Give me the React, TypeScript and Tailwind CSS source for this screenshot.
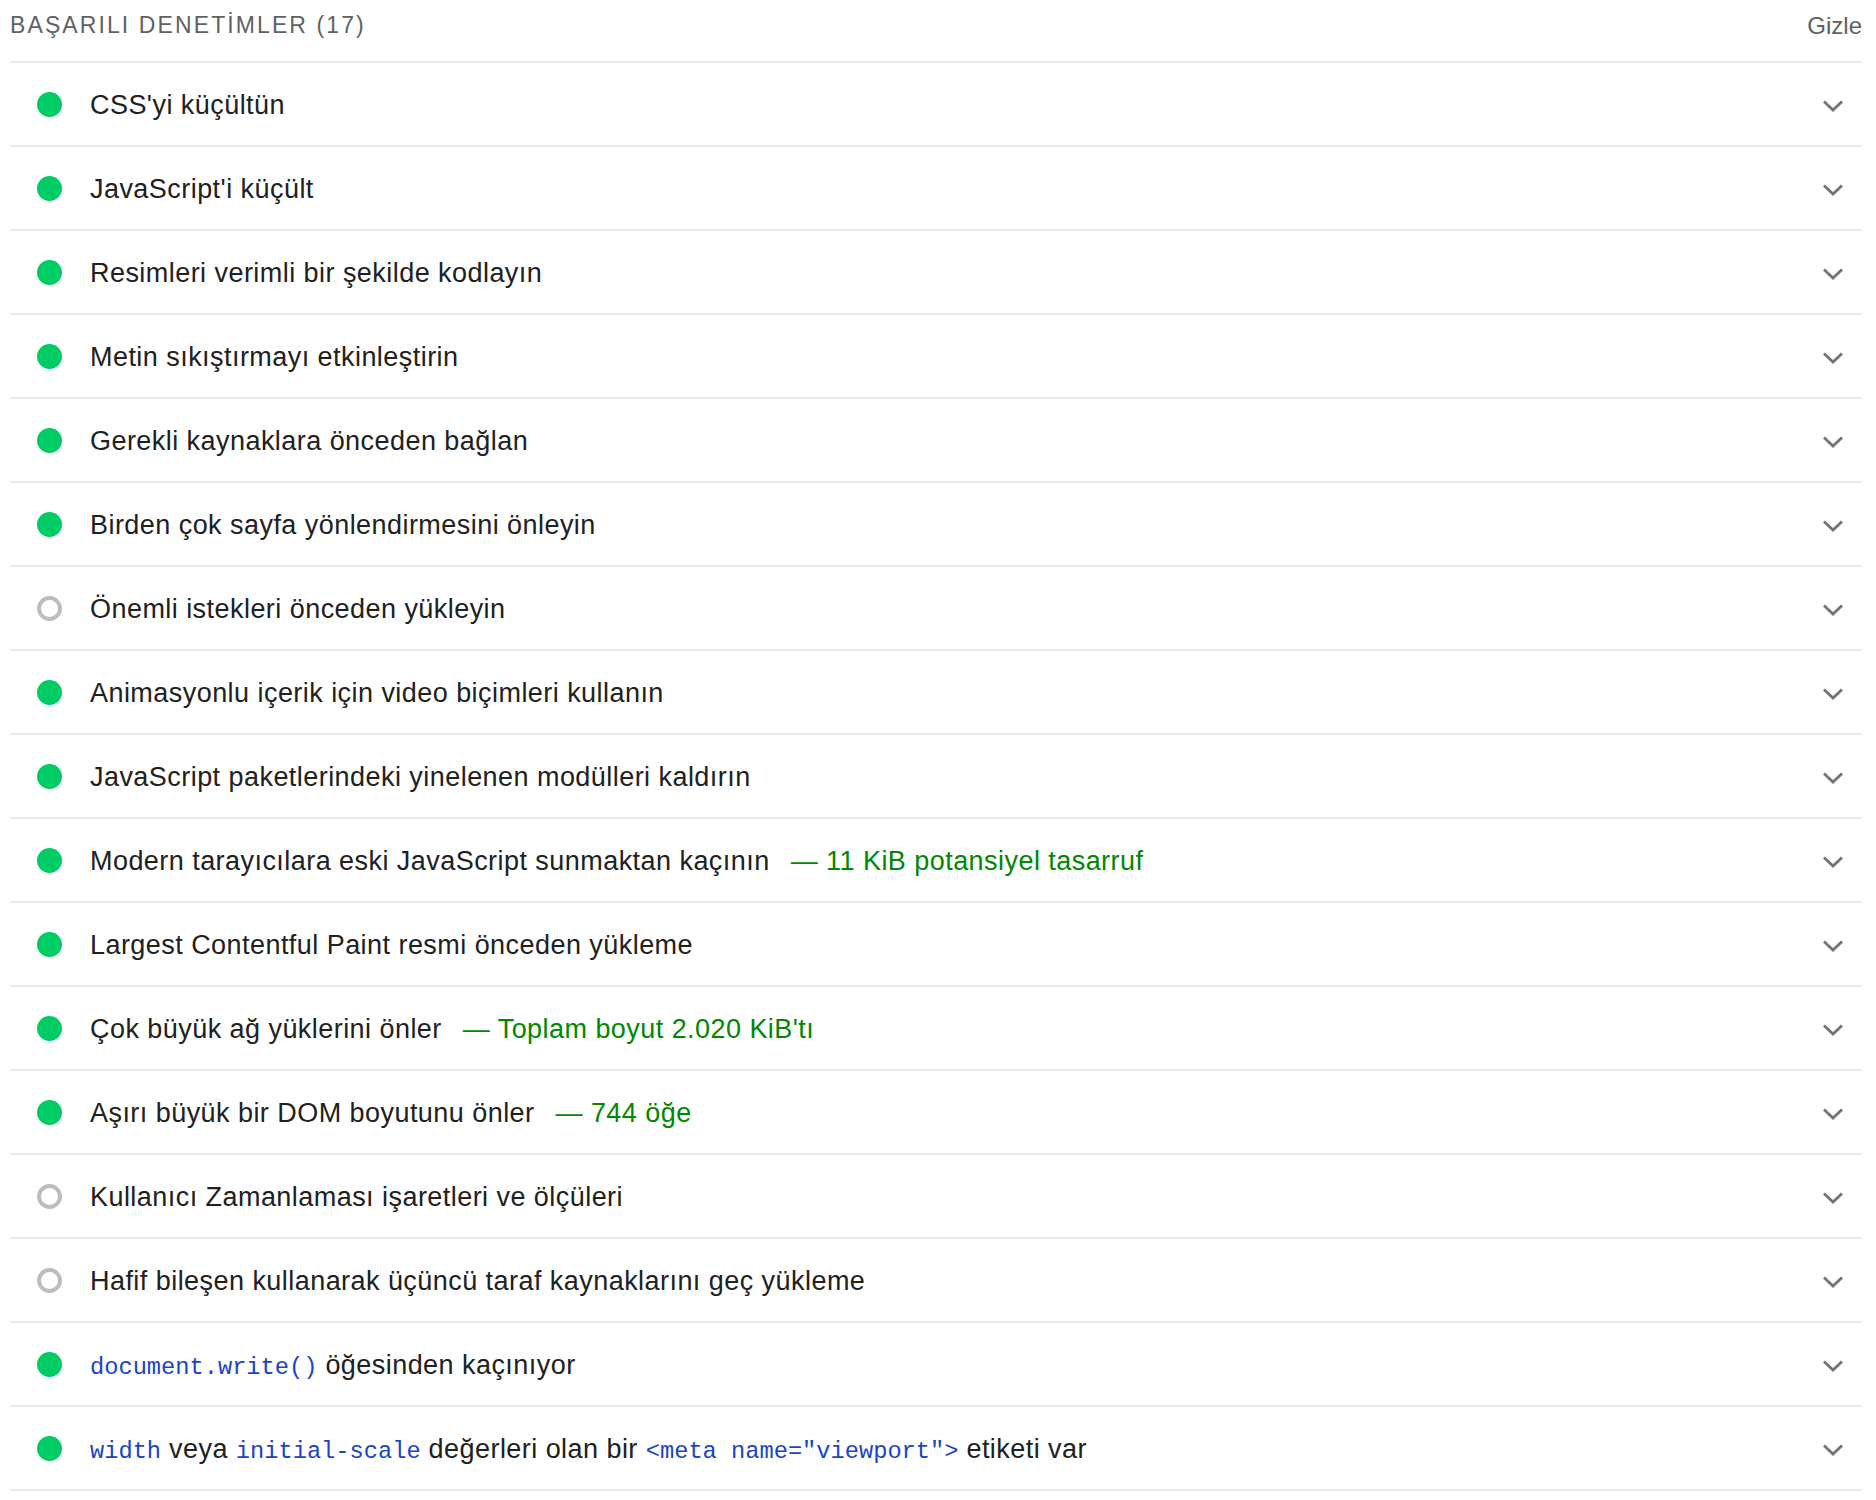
import React from 'react'

type Part = { t: string; code?: boolean }

type Audit = {
  title: Part[]
  status: 'pass' | 'info'
  display?: string
}

const AUDITS: Audit[] = [
  { title: [{ t: "CSS'yi küçültün" }], status: 'pass' },
  { title: [{ t: "JavaScript'i küçült" }], status: 'pass' },
  { title: [{ t: 'Resimleri verimli bir şekilde kodlayın' }], status: 'pass' },
  { title: [{ t: 'Metin sıkıştırmayı etkinleştirin' }], status: 'pass' },
  { title: [{ t: 'Gerekli kaynaklara önceden bağlan' }], status: 'pass' },
  { title: [{ t: 'Birden çok sayfa yönlendirmesini önleyin' }], status: 'pass' },
  { title: [{ t: 'Önemli istekleri önceden yükleyin' }], status: 'info' },
  { title: [{ t: 'Animasyonlu içerik için video biçimleri kullanın' }], status: 'pass' },
  { title: [{ t: 'JavaScript paketlerindeki yinelenen modülleri kaldırın' }], status: 'pass' },
  {
    title: [{ t: 'Modern tarayıcılara eski JavaScript sunmaktan kaçının' }],
    status: 'pass',
    display: '— 11 KiB potansiyel tasarruf',
  },
  { title: [{ t: 'Largest Contentful Paint resmi önceden yükleme' }], status: 'pass' },
  {
    title: [{ t: 'Çok büyük ağ yüklerini önler' }],
    status: 'pass',
    display: "— Toplam boyut 2.020 KiB'tı",
  },
  {
    title: [{ t: 'Aşırı büyük bir DOM boyutunu önler' }],
    status: 'pass',
    display: '— 744 öğe',
  },
  { title: [{ t: 'Kullanıcı Zamanlaması işaretleri ve ölçüleri' }], status: 'info' },
  { title: [{ t: 'Hafif bileşen kullanarak üçüncü taraf kaynaklarını geç yükleme' }], status: 'info' },
  {
    title: [{ t: 'document.write()', code: true }, { t: ' öğesinden kaçınıyor' }],
    status: 'pass',
  },
  {
    title: [
      { t: 'width', code: true },
      { t: ' veya ' },
      { t: 'initial-scale', code: true },
      { t: ' değerleri olan bir ' },
      { t: '<meta name="viewport">', code: true },
      { t: ' etiketi var' },
    ],
    status: 'pass',
  },
]

function StatusIcon({ status }: { status: Audit['status'] }) {
  if (status === 'pass') {
    return <span className="block w-[25px] h-[25px] rounded-full bg-[#00cc66] shrink-0" />
  }
  return <span className="block w-[25px] h-[25px] rounded-full border-[4px] border-[#bdbdbd] shrink-0" />
}

function Chevron() {
  return (
    <svg width="22" height="14" viewBox="0 0 22 14" className="shrink-0 mt-[3px]">
      <polyline points="2,2.5 11,11 20,2.5" fill="none" stroke="#757575" strokeWidth="3" />
    </svg>
  )
}

function AuditRow({ audit }: { audit: Audit }) {
  return (
    <div className="flex items-center h-[84px] border-b-2 border-[#ebebeb] pl-[27px] pr-[18px]">
      <StatusIcon status={audit.status} />
      <div className="flex-1 ml-[28px] mt-[3px] text-[27px] tracking-[0.45px] text-[#212121] whitespace-pre">
        {audit.title.map((p, i) =>
          p.code ? (
            <code key={i} className="font-['Liberation_Mono',monospace] text-[23.7px] tracking-normal text-[#1a44c8]">
              {p.t}
            </code>
          ) : (
            <span key={i}>{p.t}</span>
          )
        )}
        {audit.display && <span className="ml-[21px] text-[#008800]">{audit.display}</span>}
      </div>
      <Chevron />
    </div>
  )
}

export default function App() {
  return (
    <div className="bg-white min-h-screen font-['Liberation_Sans',Arial,sans-serif]">
      <div className="ml-[10px] w-[1852px]">
        <div className="flex items-center justify-between h-[63px] pb-[10px] border-b-2 border-[#ebebeb]">
          <span className="text-[23px] tracking-[2.1px] text-[#616161]">BAŞARILI DENETİMLER (17)</span>
          <span className="text-[24px] text-[#616161]">Gizle</span>
        </div>
        {AUDITS.map((a, i) => (
          <AuditRow key={i} audit={a} />
        ))}
      </div>
    </div>
  )
}
